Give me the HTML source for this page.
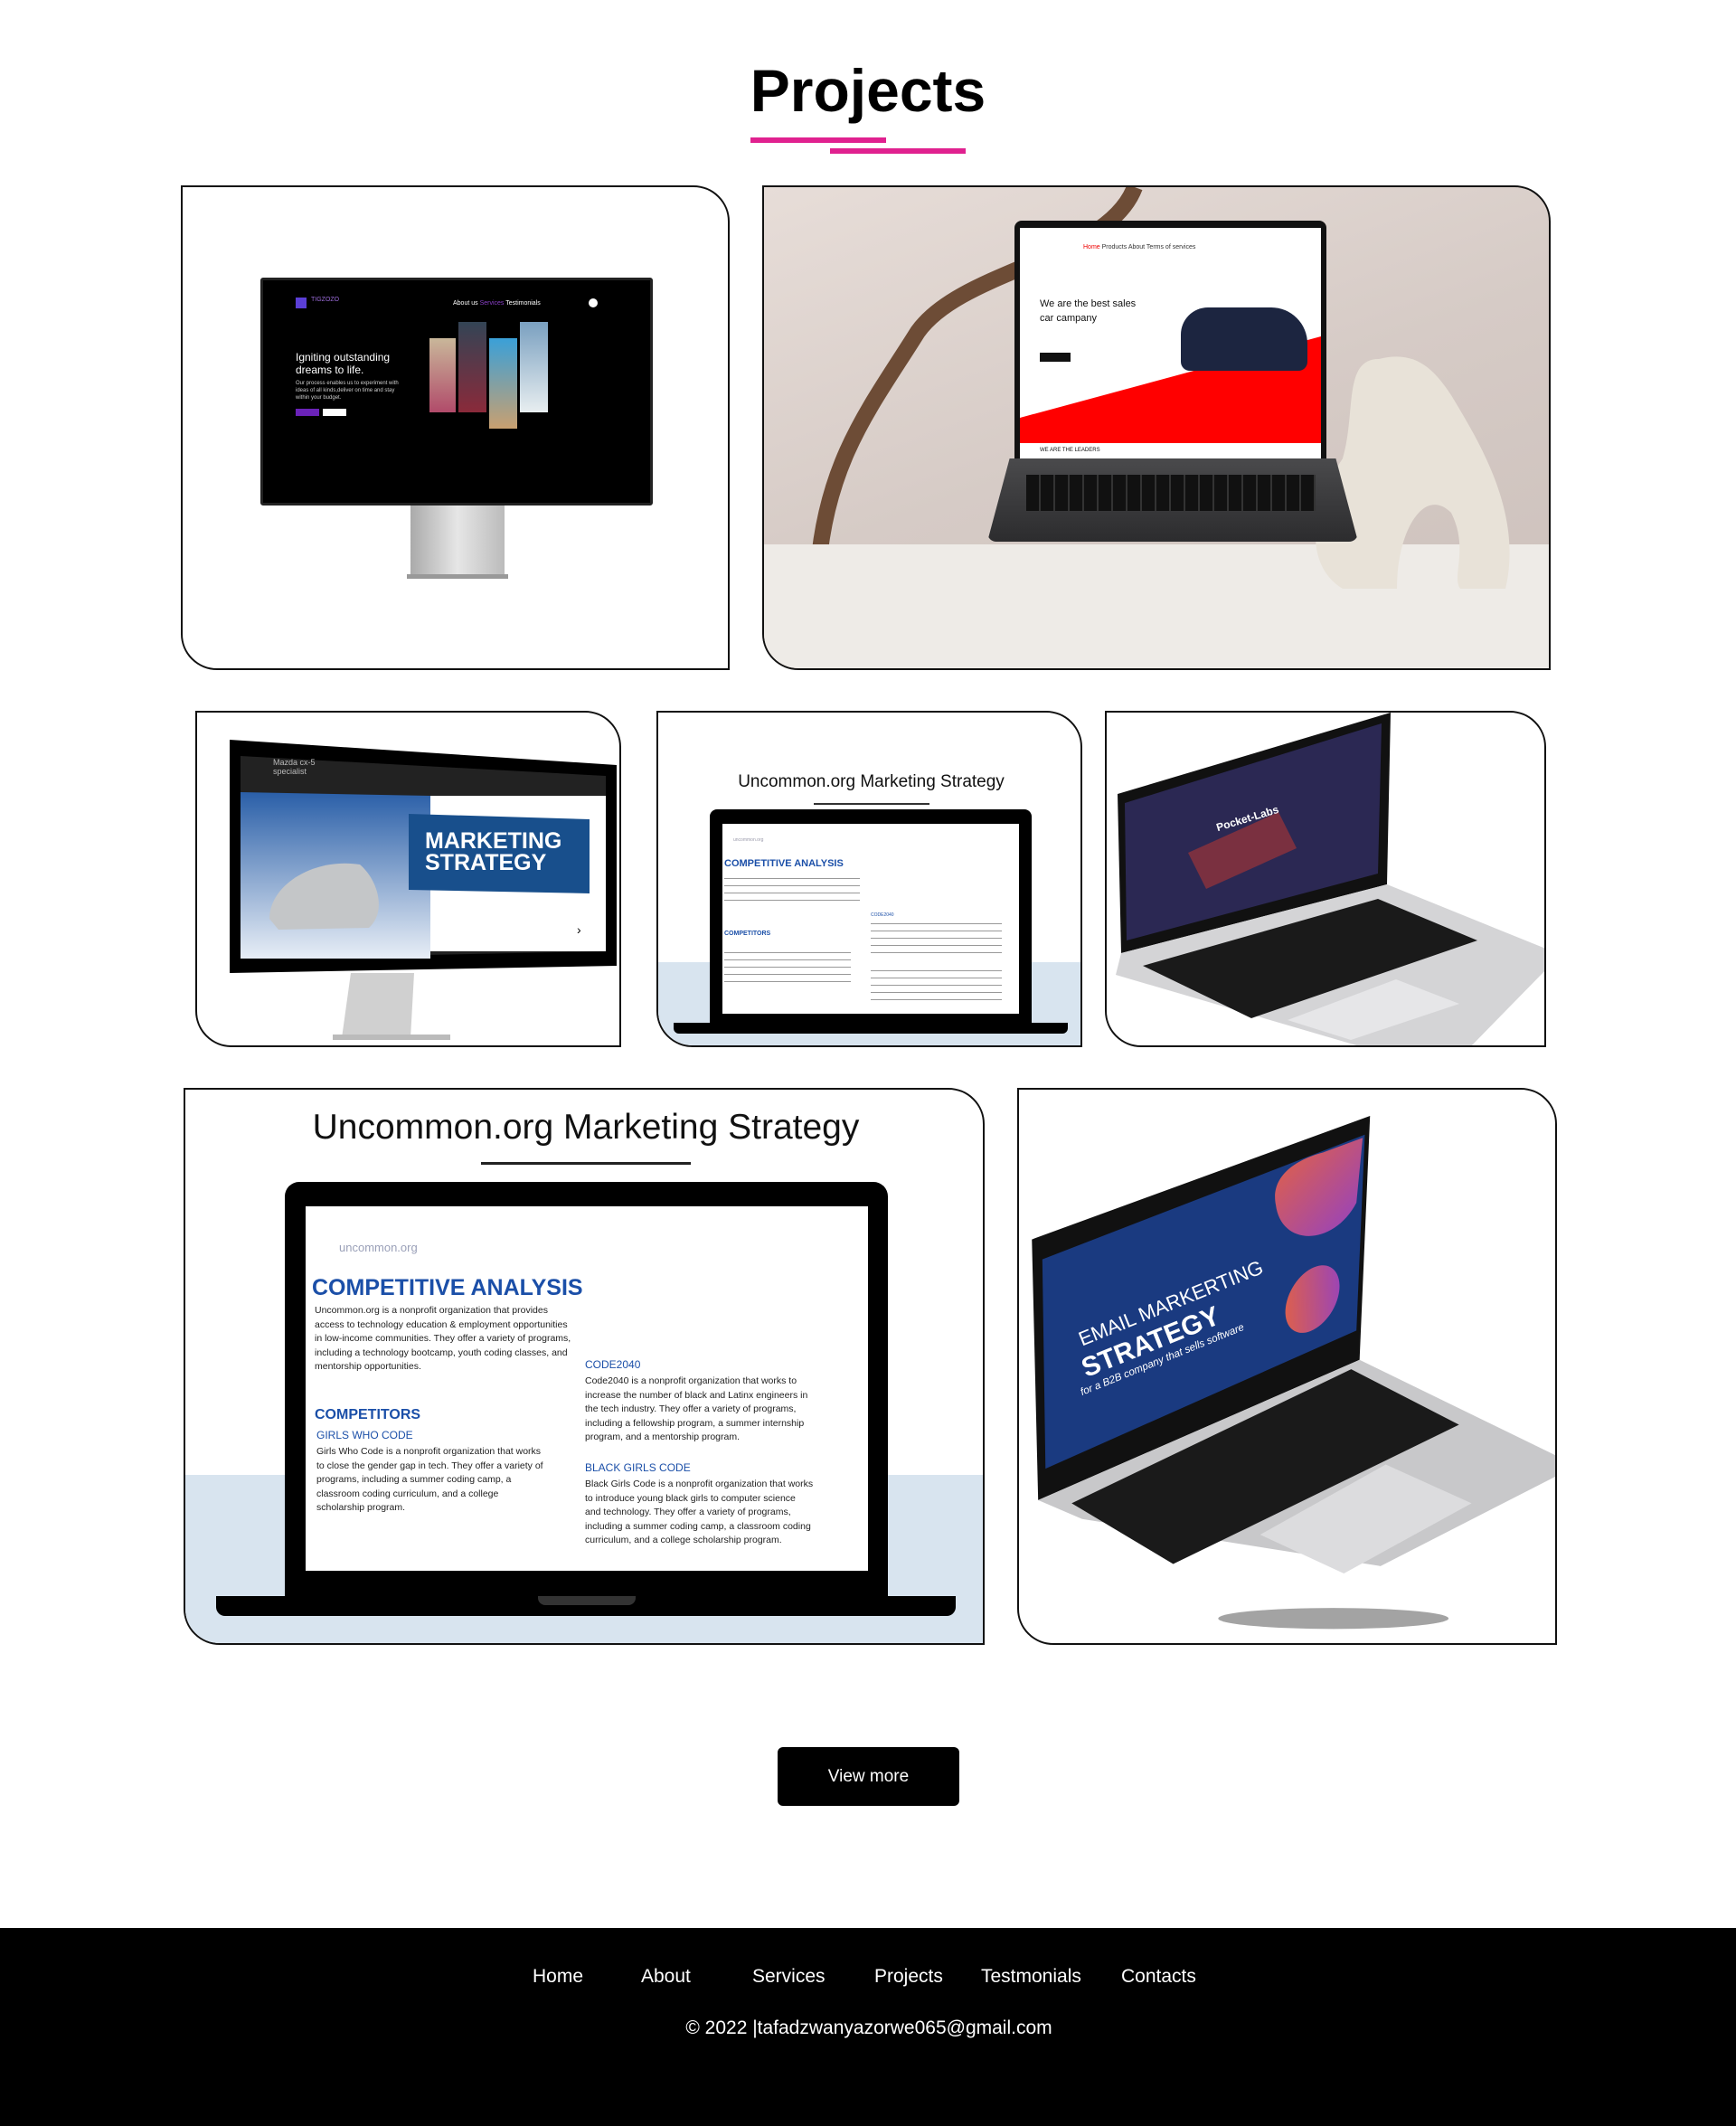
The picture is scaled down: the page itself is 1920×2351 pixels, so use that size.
<!DOCTYPE html>
<html><head><meta charset="utf-8">
<style>
*{margin:0;padding:0;box-sizing:border-box}
body{width:1920px;height:2351px;background:#fff;font-family:"Liberation Sans",sans-serif;position:relative;overflow:hidden}
.a{position:absolute}
.card{position:absolute;border:2px solid #111;border-radius:0 40px 0 40px;overflow:hidden;background:#fff}
.t{position:absolute;white-space:nowrap}
</style></head><body>

<div class="t" style="left:0;width:1920px;text-align:center;top:62px;font-size:66px;font-weight:bold;color:#000">Projects</div>
<div class="a" style="left:830px;top:152px;width:150px;height:6px;background:#e0218f"></div>
<div class="a" style="left:918px;top:164px;width:150px;height:6px;background:#e0218f"></div>

<!-- card1 -->
<div class="card" style="left:200px;top:205px;width:607px;height:536px">
  <div class="a" style="left:86px;top:100px;width:434px;height:252px;background:#000;border:3px solid #222;border-radius:3px">
    <div class="a" style="left:36px;top:19px;width:12px;height:12px;background:#5b3fd6"></div>
    <div class="t" style="left:53px;top:18px;font-size:7px;color:#9a6bd8">TIGZOZO</div>
    <div class="t" style="left:210px;top:22px;font-size:7px;color:#fff">About us <span style="color:#8a3fc8">Services</span> Testimonials</div>
    <div class="a" style="left:360px;top:20px;width:10px;height:10px;border-radius:50%;background:#fff"></div>
    <div class="t" style="left:36px;top:78px;font-size:12px;color:#fff;line-height:14px">Igniting outstanding<br>dreams to life.</div>
    <div class="t" style="left:36px;top:110px;font-size:6px;color:#ccc;line-height:8px">Our process enables us to experiment with<br>ideas of all kinds,deliver on time and stay<br>within your budget.</div>
    <div class="a" style="left:36px;top:142px;width:26px;height:8px;background:#6a22b8"></div>
    <div class="a" style="left:66px;top:142px;width:26px;height:8px;background:#fff"></div>
    <div class="a" style="left:184px;top:64px;width:29px;height:82px;background:linear-gradient(#c9b79a,#b14b6a)"></div>
    <div class="a" style="left:216px;top:46px;width:31px;height:100px;background:linear-gradient(#345,#8a2a3a)"></div>
    <div class="a" style="left:250px;top:64px;width:31px;height:100px;background:linear-gradient(#3aa0d8,#c9a070)"></div>
    <div class="a" style="left:284px;top:46px;width:31px;height:100px;background:linear-gradient(#7aa0c0,#e8eef0)"></div>
  </div>
  <div class="a" style="left:252px;top:352px;width:104px;height:80px;background:linear-gradient(90deg,#aaa,#e6e6e6,#bbb)"></div>
  <div class="a" style="left:248px;top:428px;width:112px;height:5px;background:#999"></div>
</div>

<!-- card2 -->
<div class="card" style="left:843px;top:205px;width:872px;height:536px;background:linear-gradient(160deg,#e7ddd8,#d6cbc6 50%,#ccc0bb)">
  <svg class="a" style="left:0;top:0" width="872" height="536">
    <path d="M410 0 C380 80 220 90 170 160 C120 240 70 300 60 420" stroke="#6d4c36" stroke-width="18" fill="none"/>
    <rect x="0" y="395" width="872" height="141" fill="#eeebe7"/>
    <path d="M680 190 C640 190 655 250 640 300 C600 360 600 420 640 444 L700 444 C700 380 730 330 760 360 C780 400 760 430 770 444 L820 444 C840 360 790 280 760 230 C740 200 720 180 680 190Z" fill="#e8e2d8"/>
  </svg>
  <div class="a" style="left:277px;top:37px;width:345px;height:265px;background:#111;border-radius:8px 8px 0 0;padding:8px 6px 0">
    <div style="position:relative;width:333px;height:257px;background:#fff;overflow:hidden">
      <svg class="a" style="left:0;top:0" width="333" height="257"><polygon points="0,210 333,120 333,257 0,257" fill="#f00"/><rect x="0" y="238" width="333" height="19" fill="#fff"/></svg>
      <div class="t" style="left:70px;top:18px;font-size:7px;color:#333"><span style="color:#e00">Home</span>  Products  About  Terms of services</div>
      <div class="t" style="left:22px;top:76px;font-size:11px;color:#111;line-height:16px">We are the best sales<br>car campany</div>
      <div class="a" style="left:22px;top:138px;width:34px;height:10px;background:#111"></div>
      <div class="a" style="left:178px;top:88px;width:140px;height:70px;background:#1c2540;border-radius:30px 40px 10px 10px"></div>
      <div class="t" style="left:22px;top:243px;font-size:6px;color:#111">WE ARE THE LEADERS</div>
    </div>
  </div>
  <div class="a" style="left:247px;top:300px;width:410px;height:92px;background:linear-gradient(#4a4a4c,#2c2c2e);clip-path:polygon(6% 0,94% 0,100% 100%,0 100%);border-radius:0 0 10px 10px"></div>
  <div class="a" style="left:290px;top:318px;width:320px;height:40px;background:repeating-linear-gradient(90deg,#111 0 14px,#333 14px 16px)"></div>
</div>

<!-- card3 -->
<div class="card" style="left:216px;top:786px;width:471px;height:372px">
  <svg class="a" style="left:0;top:0" width="471" height="372">
    <defs><linearGradient id="g3" x1="0" y1="0" x2="0" y2="1"><stop offset="0" stop-color="#2a5fa8"/><stop offset="1" stop-color="#e8eef6"/></linearGradient></defs>
    <polygon points="36,30 464,58 464,280 36,288" fill="#000"/>
    <polygon points="48,48 452,70 452,264 48,272" fill="#222"/>
    <polygon points="48,88 258,92 258,272 48,272" fill="url(#g3)"/>
    <rect x="258" y="92" width="194" height="172" fill="#fff"/>
    <polygon points="234,112 434,118 434,200 234,196" fill="#184f8c"/>
    <path d="M80 228 C80 190 130 160 180 168 C200 185 210 220 190 238 L90 240Z" fill="#c4c6c8"/>
    <polygon points="170,288 240,288 236,360 160,360" fill="#d0d0d0"/>
    <rect x="150" y="356" width="130" height="6" fill="#bbb"/>
  </svg>
  <div class="t" style="left:252px;top:130px;font-size:25px;font-weight:bold;color:#fff;line-height:24px">MARKETING<br>STRATEGY</div>
  <div class="t" style="left:84px;top:50px;font-size:9px;color:#bbb;line-height:10px">Mazda cx-5<br>specialist</div>
  <div class="t" style="left:420px;top:232px;font-size:14px;color:#000">›</div>
</div>

<!-- card4 -->
<div class="card" style="left:726px;top:786px;width:471px;height:372px">
  <div class="a" style="left:0;top:276px;width:471px;height:96px;background:#d8e4ef"></div>
  <div class="t" style="left:0;width:471px;text-align:center;top:66px;font-size:19px;color:#111">Uncommon.org Marketing Strategy</div>
  <div class="a" style="left:172px;top:100px;width:128px;height:2px;background:#333"></div>
  <div class="a" style="left:57px;top:107px;width:356px;height:236px;background:#000;border-radius:8px 8px 0 0"></div>
  <div class="a" style="left:71px;top:123px;width:328px;height:210px;background:#fff;overflow:hidden">
    <div class="t" style="left:12px;top:15px;font-size:5px;color:#99a">uncommon.org</div>
    <div class="t" style="left:2px;top:38px;font-size:11px;font-weight:bold;color:#1b4fa8">COMPETITIVE ANALYSIS</div>
    <div class="a" style="left:2px;top:56px;width:150px;height:36px;background:repeating-linear-gradient(#fff 0 4px,#999 4px 5px,#fff 5px 8px)"></div>
    <div class="t" style="left:2px;top:118px;font-size:7px;font-weight:bold;color:#1b4fa8">COMPETITORS</div>
    <div class="a" style="left:2px;top:138px;width:140px;height:44px;background:repeating-linear-gradient(#fff 0 4px,#999 4px 5px,#fff 5px 8px)"></div>
    <div class="t" style="left:164px;top:98px;font-size:5px;color:#1b4fa8">CODE2040</div>
    <div class="a" style="left:164px;top:106px;width:145px;height:40px;background:repeating-linear-gradient(#fff 0 4px,#999 4px 5px,#fff 5px 8px)"></div>
    <div class="a" style="left:164px;top:158px;width:145px;height:44px;background:repeating-linear-gradient(#fff 0 4px,#999 4px 5px,#fff 5px 8px)"></div>
  </div>
  <div class="a" style="left:17px;top:343px;width:436px;height:12px;background:#000;border-radius:0 0 6px 6px"></div>
</div>

<!-- card5 -->
<div class="card" style="left:1222px;top:786px;width:488px;height:372px">
  <svg class="a" style="left:0;top:0" width="488" height="372">
    <polygon points="12,90 314,0 310,190 16,266" fill="#111"/>
    <polygon points="20,100 304,12 300,178 22,252" fill="#2b2853"/>
    <polygon points="90,155 190,110 210,150 110,195" fill="#7a3040"/>
    <polygon points="16,266 310,190 488,262 488,282 400,372 290,372 10,290" fill="#d4d4d6"/>
    <polygon points="40,280 300,206 410,252 160,338" fill="#1a1a1a"/>
    <polygon points="200,340 320,295 390,322 270,362" fill="#e6e6e8"/>
  </svg>
  <div class="t" style="left:120px;top:110px;font-size:12px;font-weight:bold;color:#fff;transform:rotate(-17deg)">Pocket-Labs</div>
</div>

<!-- card6 -->
<div class="card" style="left:203px;top:1203px;width:886px;height:616px">
  <div class="a" style="left:0;top:426px;width:886px;height:190px;background:#d8e4ef"></div>
  <div class="t" style="left:0;width:886px;text-align:center;top:20px;font-size:39px;color:#111">Uncommon.org Marketing Strategy</div>
  <div class="a" style="left:327px;top:80px;width:232px;height:3px;background:#222"></div>
  <div class="a" style="left:110px;top:102px;width:667px;height:460px;background:#000;border-radius:16px 16px 0 0"></div>
  <div class="a" style="left:133px;top:129px;width:622px;height:403px;background:#fff;overflow:hidden">
    <div class="t" style="left:37px;top:38px;font-size:13px;color:#9aa0b8">uncommon.org</div>
    <div class="t" style="left:7px;top:76px;font-size:25px;font-weight:bold;color:#1b4fa8">COMPETITIVE ANALYSIS</div>
    <div class="t" style="left:10px;top:108px;font-size:10.5px;color:#222;line-height:15.5px">Uncommon.org is a nonprofit organization that provides<br>access to technology education &amp; employment opportunities<br>in low-income communities. They offer a variety of programs,<br>including a technology bootcamp, youth coding classes, and<br>mentorship opportunities.</div>
    <div class="t" style="left:10px;top:222px;font-size:16px;font-weight:bold;color:#1b4fa8">COMPETITORS</div>
    <div class="t" style="left:12px;top:246px;font-size:12px;color:#1b4fa8">GIRLS WHO CODE</div>
    <div class="t" style="left:12px;top:264px;font-size:10.5px;color:#222;line-height:15.5px">Girls Who Code is a nonprofit organization that works<br>to close the gender gap in tech. They offer a variety of<br>programs, including a summer coding camp, a<br>classroom coding curriculum, and a college<br>scholarship program.</div>
    <div class="t" style="left:309px;top:168px;font-size:12px;color:#1b4fa8">CODE2040</div>
    <div class="t" style="left:309px;top:186px;font-size:10.5px;color:#222;line-height:15.5px">Code2040 is a nonprofit organization that works to<br>increase the number of black and Latinx engineers in<br>the tech industry. They offer a variety of programs,<br>including a fellowship program, a summer internship<br>program, and a mentorship program.</div>
    <div class="t" style="left:309px;top:282px;font-size:12px;color:#1b4fa8">BLACK GIRLS CODE</div>
    <div class="t" style="left:309px;top:300px;font-size:10.5px;color:#222;line-height:15.5px">Black Girls Code is a nonprofit organization that works<br>to introduce young black girls to computer science<br>and technology. They offer a variety of programs,<br>including a summer coding camp, a classroom coding<br>curriculum, and a college scholarship program.</div>
  </div>
  <div class="a" style="left:34px;top:560px;width:818px;height:22px;background:#000;border-radius:0 0 10px 10px"></div>
  <div class="a" style="left:390px;top:560px;width:108px;height:10px;background:#333;border-radius:0 0 8px 8px"></div>
</div>

<!-- card7 -->
<div class="card" style="left:1125px;top:1203px;width:597px;height:616px">
  <svg class="a" style="left:0;top:0" width="597" height="616" viewBox="0 0 515 532">
    <defs><linearGradient id="g7" x1="0" y1="0" x2="1" y2="1"><stop offset="0" stop-color="#e8643a"/><stop offset="1" stop-color="#9040c8"/></linearGradient></defs>
    <ellipse cx="300" cy="505" rx="110" ry="10" fill="#666" opacity=".6"/>
    <polygon points="12,143 335,25 325,258 18,392" fill="#111"/>
    <polygon points="22,162 330,43 322,230 25,362" fill="#1a3a80"/>
    <path d="M290 60 L328 46 L322 108 C300 150 250 150 245 110 C240 85 260 68 290 60Z" fill="url(#g7)"/>
    <ellipse cx="280" cy="200" rx="35" ry="22" transform="rotate(-60 280 200)" fill="url(#g7)"/>
    <polygon points="18,392 325,258 518,352 515,368 345,455 60,410" fill="#c8c8ca"/>
    <polygon points="50,395 317,267 420,320 147,453" fill="#1a1a1a"/>
    <polygon points="230,425 350,358 432,395 310,462" fill="#dcdcde"/>
    <text x="60" y="245" font-size="19" fill="#fff" transform="rotate(-22 60 245)" font-family="Liberation Sans">EMAIL MARKERTING</text>
    <text x="64" y="275" font-size="26" font-weight="bold" fill="#fff" transform="rotate(-22 64 275)" font-family="Liberation Sans">STRATEGY</text>
    <text x="60" y="292" font-size="10" font-style="italic" fill="#fff" transform="rotate(-22 60 292)" font-family="Liberation Sans">for a B2B company that sells software</text>
  </svg>
</div>

<div class="a" style="left:860px;top:1932px;width:201px;height:65px;background:#000;border-radius:6px;color:#fff;font-size:19px;text-align:center;line-height:65px">View more</div>

<div class="a" style="left:0;top:2132px;width:1920px;height:219px;background:#000">
  <div class="t" style="left:589px;top:42px;font-size:21px;color:#fff">Home</div>
  <div class="t" style="left:709px;top:42px;font-size:21px;color:#fff">About</div>
  <div class="t" style="left:832px;top:42px;font-size:21px;color:#fff">Services</div>
  <div class="t" style="left:967px;top:42px;font-size:21px;color:#fff">Projects</div>
  <div class="t" style="left:1085px;top:42px;font-size:21px;color:#fff">Testmonials</div>
  <div class="t" style="left:1240px;top:42px;font-size:21px;color:#fff">Contacts</div>
  <div class="t" style="left:0;width:1922px;text-align:center;top:99px;font-size:21px;color:#fff">© 2022 |tafadzwanyazorwe065@gmail.com</div>
</div>
</body></html>
